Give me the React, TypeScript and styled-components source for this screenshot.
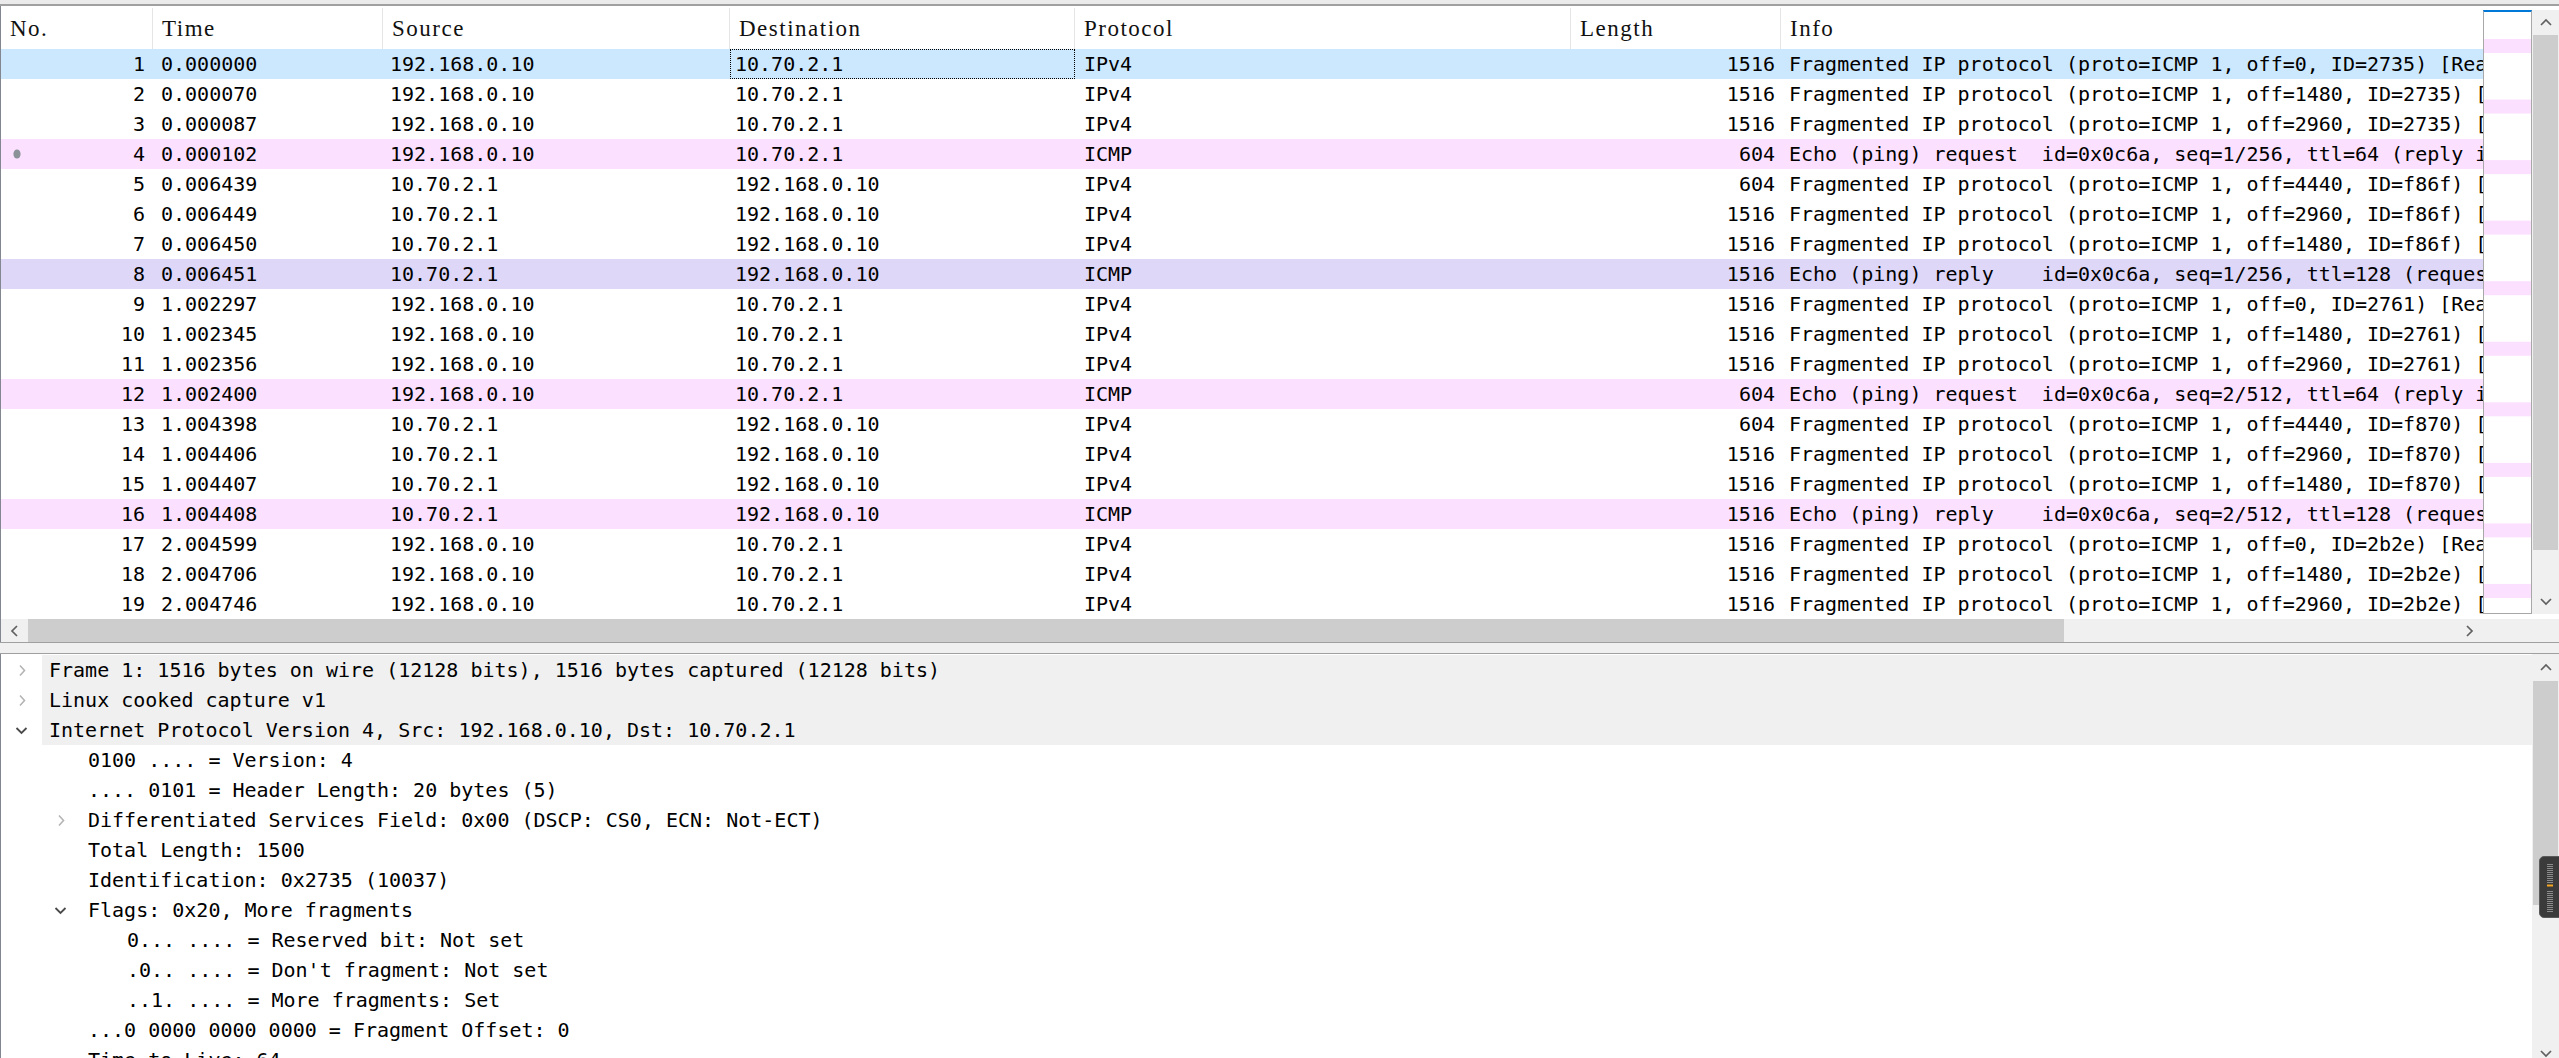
import React from 'react';
import styled, { createGlobalStyle } from 'styled-components';

const MONO = `"DejaVu Sans Mono", "Liberation Mono", monospace`;
const SERIF = `"Liberation Serif", "DejaVu Serif", serif`;

const GlobalStyle = createGlobalStyle`
  html, body {
    margin: 0;
    padding: 0;
    background: #f0f0f0;
    overflow: hidden;
  }
  #root {
    width: 2559px;
    height: 1058px;
  }
`;

type Packet = {
  no: number;
  time: string;
  src: string;
  dst: string;
  proto: string;
  len: number;
  info: string;
};

const A = '192.168.0.10';
const B = '10.70.2.1';
const frag = (off: number, id: string, tail = '') =>
  `Fragmented IP protocol (proto=ICMP 1, off=${off}, ID=${id})${tail}`;

const packets: Packet[] = [
  { no: 1, time: '0.000000', src: A, dst: B, proto: 'IPv4', len: 1516, info: frag(0, '2735', ' [Reassembled in #4]') },
  { no: 2, time: '0.000070', src: A, dst: B, proto: 'IPv4', len: 1516, info: frag(1480, '2735', ' [Reassembled in #4]') },
  { no: 3, time: '0.000087', src: A, dst: B, proto: 'IPv4', len: 1516, info: frag(2960, '2735', ' [Reassembled in #4]') },
  { no: 4, time: '0.000102', src: A, dst: B, proto: 'ICMP', len: 604, info: 'Echo (ping) request  id=0x0c6a, seq=1/256, ttl=64 (reply in 8)' },
  { no: 5, time: '0.006439', src: B, dst: A, proto: 'IPv4', len: 604, info: frag(4440, 'f86f', ' [Reassembled in #8]') },
  { no: 6, time: '0.006449', src: B, dst: A, proto: 'IPv4', len: 1516, info: frag(2960, 'f86f', ' [Reassembled in #8]') },
  { no: 7, time: '0.006450', src: B, dst: A, proto: 'IPv4', len: 1516, info: frag(1480, 'f86f', ' [Reassembled in #8]') },
  { no: 8, time: '0.006451', src: B, dst: A, proto: 'ICMP', len: 1516, info: 'Echo (ping) reply    id=0x0c6a, seq=1/256, ttl=128 (request in 4)' },
  { no: 9, time: '1.002297', src: A, dst: B, proto: 'IPv4', len: 1516, info: frag(0, '2761', ' [Reassembled in #12]') },
  { no: 10, time: '1.002345', src: A, dst: B, proto: 'IPv4', len: 1516, info: frag(1480, '2761', ' [Reassembled in #12]') },
  { no: 11, time: '1.002356', src: A, dst: B, proto: 'IPv4', len: 1516, info: frag(2960, '2761', ' [Reassembled in #12]') },
  { no: 12, time: '1.002400', src: A, dst: B, proto: 'ICMP', len: 604, info: 'Echo (ping) request  id=0x0c6a, seq=2/512, ttl=64 (reply in 16)' },
  { no: 13, time: '1.004398', src: B, dst: A, proto: 'IPv4', len: 604, info: frag(4440, 'f870', ' [Reassembled in #16]') },
  { no: 14, time: '1.004406', src: B, dst: A, proto: 'IPv4', len: 1516, info: frag(2960, 'f870', ' [Reassembled in #16]') },
  { no: 15, time: '1.004407', src: B, dst: A, proto: 'IPv4', len: 1516, info: frag(1480, 'f870', ' [Reassembled in #16]') },
  { no: 16, time: '1.004408', src: B, dst: A, proto: 'ICMP', len: 1516, info: 'Echo (ping) reply    id=0x0c6a, seq=2/512, ttl=128 (request in 12)' },
  { no: 17, time: '2.004599', src: A, dst: B, proto: 'IPv4', len: 1516, info: frag(0, '2b2e', ' [Reassembled in #20]') },
  { no: 18, time: '2.004706', src: A, dst: B, proto: 'IPv4', len: 1516, info: frag(1480, '2b2e', ' [Reassembled in #20]') },
  { no: 19, time: '2.004746', src: A, dst: B, proto: 'IPv4', len: 1516, info: frag(2960, '2b2e', ' [Reassembled in #20]') },
];

type Detail = {
  level: number;
  arrow?: 'open' | 'closed';
  band?: boolean;
  text: string;
};

const details: Detail[] = [
  { level: 0, arrow: 'closed', band: true, text: 'Frame 1: 1516 bytes on wire (12128 bits), 1516 bytes captured (12128 bits)' },
  { level: 0, arrow: 'closed', band: true, text: 'Linux cooked capture v1' },
  { level: 0, arrow: 'open', band: true, text: 'Internet Protocol Version 4, Src: 192.168.0.10, Dst: 10.70.2.1' },
  { level: 1, text: '0100 .... = Version: 4' },
  { level: 1, text: '.... 0101 = Header Length: 20 bytes (5)' },
  { level: 1, arrow: 'closed', text: 'Differentiated Services Field: 0x00 (DSCP: CS0, ECN: Not-ECT)' },
  { level: 1, text: 'Total Length: 1500' },
  { level: 1, text: 'Identification: 0x2735 (10037)' },
  { level: 1, arrow: 'open', text: 'Flags: 0x20, More fragments' },
  { level: 2, text: '0... .... = Reserved bit: Not set' },
  { level: 2, text: '.0.. .... = Don\'t fragment: Not set' },
  { level: 2, text: '..1. .... = More fragments: Set' },
  { level: 1, text: '...0 0000 0000 0000 = Fragment Offset: 0' },
  { level: 1, text: 'Time to Live: 64' },
];

const COLS = '152px 230px 347px 345px 496px 210px 1fr';

const Window = styled.div`
  display: flex;
  flex-direction: column;
  width: 2559px;
  height: 1058px;
  overflow: hidden;
  background: #f0f0f0;
`;

const TopEdge = styled.div`
  flex: none;
  height: 4px;
  background: #ebebeb;
  border-bottom: 2px solid #a0a0a0;
`;

const ListPane = styled.div`
  flex: none;
  height: 636px;
  box-sizing: border-box;
  display: grid;
  grid-template-columns: 1fr 49px 27px;
  grid-template-rows: 1fr 23px;
  background: #fff;
  border-left: 1px solid #828790;
`;

const Table = styled.div`
  display: flex;
  flex-direction: column;
  padding-top: 2px;
  overflow: hidden;
  min-width: 0;
`;

const HeaderRow = styled.div`
  display: grid;
  grid-template-columns: ${COLS};
  height: 41px;
  flex: none;
`;

const HeadCell = styled.div`
  font-family: ${SERIF};
  font-size: 23px;
  letter-spacing: 1.5px;
  line-height: 41px;
  color: #111;
  padding-left: 9px;
  border-right: 1px solid #e5e5e5;
  white-space: nowrap;
  overflow: hidden;

  &:last-child {
    border-right: none;
  }
`;

const PacketRow = styled.div<{ $bg: string }>`
  display: grid;
  grid-template-columns: ${COLS};
  height: 30px;
  flex: none;
  background: ${({ $bg }) => $bg};
`;

const Cell = styled.div<{ $right?: boolean; $focus?: boolean; $pad?: number }>`
  font-family: ${MONO};
  font-size: 20px;
  line-height: 30px;
  color: #000;
  white-space: pre;
  overflow: hidden;
  box-sizing: border-box;
  text-align: ${({ $right }) => ($right ? 'right' : 'left')};
  padding: ${({ $right, $pad = 8 }) => ($right ? `0 ${$pad}px 0 0` : `0 0 0 ${$pad}px`)};
  outline: ${({ $focus }) => ($focus ? '1px dotted #000' : 'none')};
  outline-offset: -1px;
`;

const NoCell = styled(Cell)`
  display: flex;
  align-items: center;
  padding: 0 8px 0 12px;

  span {
    margin-left: auto;
  }
`;

const Minimap = styled.div`
  margin: 4px 0 5px;
  border: 1px solid #a8a8a8;
  border-top: 2px solid #0078d7;
  background: #fff;
  overflow: hidden;
`;

const VScroll = styled.div<{ $top?: number; $bottom?: number }>`
  display: flex;
  flex-direction: column;
  background: #f0f0f0;
  margin-top: ${({ $top = 0 }) => $top}px;
  margin-bottom: ${({ $bottom = 0 }) => $bottom}px;
  min-height: 0;
`;

const ScrollBtn = styled.div<{ $size: number; $horizontal?: boolean }>`
  flex: none;
  display: flex;
  align-items: center;
  justify-content: center;
  ${({ $size, $horizontal }) => ($horizontal ? `width: ${$size}px;` : `height: ${$size}px;`)}
`;

const Thumb = styled.div<{ $size: number; $horizontal?: boolean }>`
  flex: none;
  background: #cdcdcd;
  ${({ $size, $horizontal }) =>
    $horizontal ? `width: ${$size}px;` : `height: ${$size}px; margin: 0 1px;`}
`;

const Track = styled.div`
  flex: 1;
`;

const HScroll = styled.div`
  display: flex;
  background: #f0f0f0;
`;

const Corner = styled.div`
  grid-column: 2 / 4;
  background: #f0f0f0;
`;

const Splitter = styled.div`
  flex: none;
  height: 12px;
  box-sizing: border-box;
  border-top: 1px solid #a0a0a0;
  border-bottom: 1px solid #a0a0a0;
  background: #f0f0f0;
`;

const DetailPane = styled.div`
  position: relative;
  flex: 1;
  min-height: 0;
  display: grid;
  grid-template-columns: 1fr 27px;
  background: #fff;
  border-left: 1px solid #828790;
`;

const Tree = styled.div`
  padding-top: 1px;
  overflow: hidden;
  min-width: 0;
`;

const TreeRow = styled.div<{ $level: number }>`
  display: flex;
  height: 30px;
  padding-left: ${({ $level }) => $level * 39}px;
`;

const ArrowBox = styled.div`
  flex: none;
  width: 41px;
  display: flex;
  align-items: center;
  justify-content: center;
`;

const TreeLabel = styled.div<{ $band?: boolean }>`
  flex: 1;
  padding-left: 7px;
  font-family: ${MONO};
  font-size: 20px;
  line-height: 30px;
  color: #000;
  white-space: pre;
  overflow: hidden;
  background: ${({ $band }) => ($band ? '#f0f0f0' : 'transparent')};
`;

const FloatWidget = styled.div`
  position: absolute;
  top: 202px;
  right: -6px;
  width: 26px;
  height: 62px;
  box-sizing: border-box;
  background: #3b3b3b;
  border: 1px solid #5a5a5a;
  border-radius: 5px;
`;

function Chevron({ dir, color = '#606060' }: { dir: 'up' | 'down' | 'left' | 'right'; color?: string }) {
  const pts = {
    up: '1,7 6,2 11,7',
    down: '1,2 6,7 11,2',
    left: '7,1 2,6 7,11',
    right: '2,1 7,6 2,11',
  }[dir];
  const vertical = dir === 'up' || dir === 'down';
  return (
    <svg width={vertical ? 12 : 9} height={vertical ? 9 : 12} viewBox={vertical ? '0 0 12 9' : '0 0 9 12'}>
      <polyline points={pts} fill="none" stroke={color} strokeWidth="1.7" />
    </svg>
  );
}

function TreeArrow({ kind }: { kind: 'open' | 'closed' }) {
  if (kind === 'open') {
    return (
      <svg width="13" height="9" viewBox="0 0 13 9">
        <polyline points="1.5,2 6.5,7 11.5,2" fill="none" stroke="#4a4a4a" strokeWidth="1.8" />
      </svg>
    );
  }
  return (
    <svg width="8" height="13" viewBox="0 0 8 13">
      <polyline points="2,1.5 6.5,6.5 2,11.5" fill="none" stroke="#b4b4b4" strokeWidth="1.6" />
    </svg>
  );
}

function RelatedDot() {
  return (
    <svg width="8" height="10" viewBox="0 0 8 10">
      <ellipse cx="4" cy="5" rx="3.6" ry="4.6" fill="#8b9298" />
    </svg>
  );
}

function MinimapStripes() {
  const stripes = Array.from({ length: 10 }, (_, i) => 27 + i * 60.55);
  return (
    <svg width="47" height="600" viewBox="0 0 47 600">
      {stripes.map((y) => (
        <rect key={y} x="0" y={y} width="47" height="14" fill="#fce0ff" />
      ))}
    </svg>
  );
}

function WidgetTicks() {
  const top = Array.from({ length: 10 }, (_, i) => 7 + i * 2);
  const bottom = Array.from({ length: 11 }, (_, i) => 34 + i * 2);
  return (
    <svg width="24" height="60" viewBox="0 0 24 60">
      {[...top, ...bottom].map((y) => (
        <line key={y} x1="7" x2="13" y1={y + 0.5} y2={y + 0.5} stroke="#8c8c8c" strokeWidth="1" />
      ))}
      <line x1="7" x2="13" y1="28.5" y2="28.5" stroke="#f5a623" strokeWidth="2" />
    </svg>
  );
}

function rowColor(p: Packet) {
  if (p.no === 1) return '#cce8ff';
  if (p.no === 8) return '#ded7f8';
  if (p.proto === 'ICMP') return '#fce0ff';
  return '#ffffff';
}

const headers = ['No.', 'Time', 'Source', 'Destination', 'Protocol', 'Length', 'Info'];

export default function App() {
  return (
    <>
      <GlobalStyle />
      <Window>
        <TopEdge />
        <ListPane>
          <Table>
            <HeaderRow>
              {headers.map((h) => (
                <HeadCell key={h}>{h}</HeadCell>
              ))}
            </HeaderRow>
            {packets.map((p) => (
              <PacketRow key={p.no} $bg={rowColor(p)}>
                <NoCell>
                  {p.no === 4 && <RelatedDot />}
                  <span>{p.no}</span>
                </NoCell>
                <Cell>{p.time}</Cell>
                <Cell $pad={7}>{p.src}</Cell>
                <Cell $pad={5} $focus={p.no === 1}>{p.dst}</Cell>
                <Cell $pad={9}>{p.proto}</Cell>
                <Cell $right $pad={6}>{p.len}</Cell>
                <Cell>{p.info}</Cell>
              </PacketRow>
            ))}
          </Table>
          <Minimap>
            <MinimapStripes />
          </Minimap>
          <VScroll $top={4} $bottom={5}>
            <ScrollBtn $size={25}>
              <Chevron dir="up" />
            </ScrollBtn>
            <Thumb $size={515} />
            <Track />
            <ScrollBtn $size={25}>
              <Chevron dir="down" />
            </ScrollBtn>
          </VScroll>
          <HScroll>
            <ScrollBtn $horizontal $size={27}>
              <Chevron dir="left" />
            </ScrollBtn>
            <Thumb $horizontal $size={2036} />
            <Track />
            <ScrollBtn $horizontal $size={28}>
              <Chevron dir="right" />
            </ScrollBtn>
          </HScroll>
          <Corner />
        </ListPane>
        <Splitter />
        <DetailPane>
          <Tree>
            {details.map((d, i) => (
              <TreeRow key={i} $level={d.level}>
                <ArrowBox>{d.arrow && <TreeArrow kind={d.arrow} />}</ArrowBox>
                <TreeLabel $band={d.band}>{d.text}</TreeLabel>
              </TreeRow>
            ))}
          </Tree>
          <VScroll $bottom={-8}>
            <ScrollBtn $size={27}>
              <Chevron dir="up" />
            </ScrollBtn>
            <Thumb $size={224} />
            <Track />
            <ScrollBtn $size={26}>
              <Chevron dir="down" />
            </ScrollBtn>
          </VScroll>
          <FloatWidget>
            <WidgetTicks />
          </FloatWidget>
        </DetailPane>
      </Window>
    </>
  );
}
